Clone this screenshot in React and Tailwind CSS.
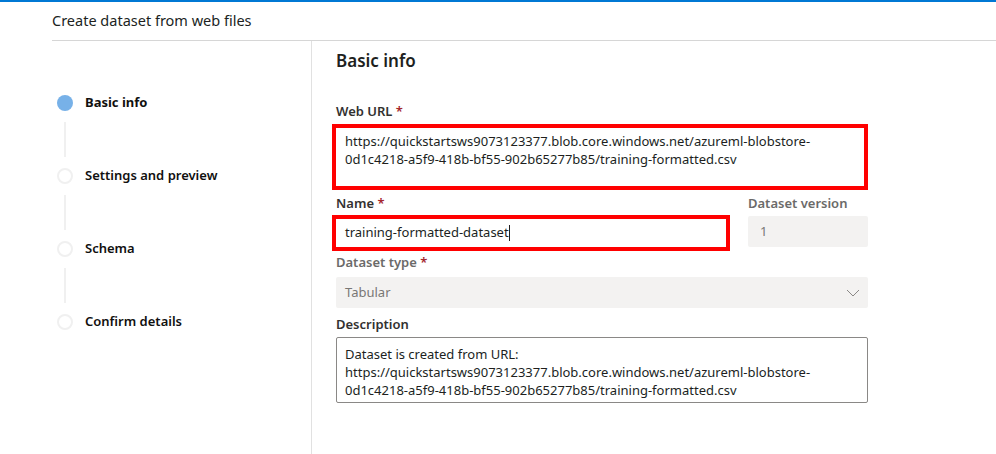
import React from 'react';

const font = { fontFamily: '"Segoe UI", "Noto Sans", sans-serif' };

const steps = [
    { label: 'Basic info', active: true },
    { label: 'Settings and preview' },
    { label: 'Schema' },
    { label: 'Confirm details' },
];

function Stepper() {
    return (
        <div className="flex flex-col pt-[54px] pl-[5px]">
            {steps.map((step, idx) => (
                <div key={idx} className="flex flex-col">
                    <div className="flex items-center h-4 gap-3">
                        {step.active ? (
                            <div className="w-4 h-4 rounded-full bg-[#77b1e8]" />
                        ) : (
                            <div className="w-4 h-4 rounded-full border-2 border-[#f0f0f0] bg-white" />
                        )}
                        <span className={`text-[13px] text-[#11100f] ${step.active ? 'font-bold' : 'font-semibold'}`}>
                            {step.label}
                        </span>
                    </div>
                    {idx < steps.length - 1 && (
                        <div className="ml-[7px] my-[11px] h-[35px] w-[2px] bg-[#f0f0f0]" />
                    )}
                </div>
            ))}
        </div>
    );
}

function Label({ children, required, muted }) {
    return (
        <div className={`text-[13px] font-semibold leading-5 ${muted ? 'text-[#6b6a69]' : 'text-[#323130]'}`}>
            {children}
            {required && <span className="text-[#a4262c]"> *</span>}
        </div>
    );
}

export default function App() {
    return (
        <div className="w-[996px] h-[454px] bg-white overflow-hidden border-t-2 border-[#0078d4]" style={font}>
            {/* Title */}
            <div className="h-[38px] pl-[52px] flex items-center">
                <h1 className="text-[14.5px] text-[#201f1e] leading-5 pb-[2px]">Create dataset from web files</h1>
            </div>

            <div className="ml-[52px] border-t border-[#d6d6d6] flex h-full">
                {/* Left stepper */}
                <div className="w-[260px] shrink-0 border-r border-[#e1e1e1]">
                    <Stepper />
                </div>

                {/* Form */}
                <div className="pl-[20px] pt-[8px] w-[556px]">
                    <h2 className="text-[17px] font-semibold text-[#201f1e] leading-6 pl-1">Basic info</h2>

                    <div className="mt-[28px] pl-1">
                        <Label required>Web URL</Label>
                    </div>
                    <div className="mt-[3px] h-[66px] border-[4px] border-[#ff0000] pl-[9px] pt-[4px] text-[13px] leading-[18px] text-[#201f1e]">
                        https://quickstartsws9073123377.blob.core.windows.net/azureml-blobstore-
                        <br />
                        0d1c4218-a5f9-418b-bf55-902b65277b85/training-formatted.csv
                    </div>

                    <div className="flex gap-[18px] mt-[3px]">
                        <div className="w-[398px]">
                            <div className="pl-1">
                                <Label required>Name</Label>
                            </div>
                            <div className="mt-[2px] h-[36px] border-[4px] border-[#ff0000] pl-[9px] flex items-center text-[13px] text-[#201f1e]">
                                <span>training-formatted-dataset</span>
                                <span className="w-px h-[16px] bg-[#201f1e]" />
                            </div>
                        </div>
                        <div className="w-[120px]">
                            <Label muted>Dataset version</Label>
                            <div className="mt-[3px] h-[31px] rounded-[2px] bg-[#f3f2f1] pl-3 flex items-center text-[13px] text-[#797775]">
                                1
                            </div>
                        </div>
                    </div>

                    <div className="mt-[1px] pl-1">
                        <Label required muted>Dataset type</Label>
                    </div>
                    <div className="ml-1 mt-[5px] h-[31px] rounded-[2px] bg-[#f3f2f1] pl-[9px] pr-[8px] flex items-center justify-between text-[13px] text-[#797775]">
                        <span>Tabular</span>
                        <svg width="14" height="8" viewBox="0 0 14 8" fill="none">
                            <path d="M1 1l6 6 6-6" stroke="#8a8886" strokeWidth="1" />
                        </svg>
                    </div>

                    <div className="mt-[6px] pl-1">
                        <Label>Description</Label>
                    </div>
                    <div className="ml-1 mt-[3px] h-[66px] rounded-[2px] border border-[#8a8886] pl-[8px] pt-[7px] text-[13px] leading-[18px] text-[#201f1e]">
                        Dataset is created from URL:
                        <br />
                        https://quickstartsws9073123377.blob.core.windows.net/azureml-blobstore-
                        <br />
                        0d1c4218-a5f9-418b-bf55-902b65277b85/training-formatted.csv
                    </div>
                </div>
            </div>
        </div>
    );
}
